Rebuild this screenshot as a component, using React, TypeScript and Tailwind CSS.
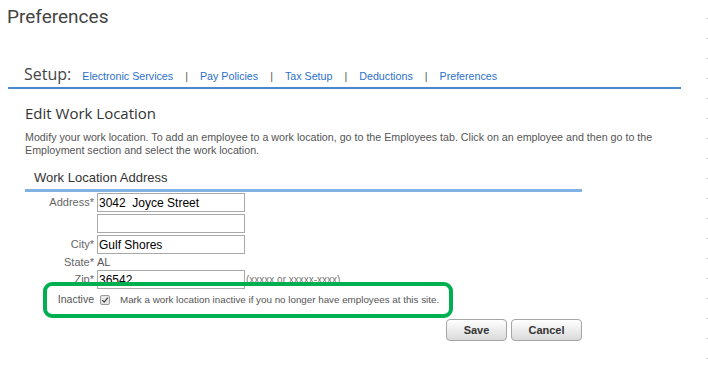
import React from "react";

const links = ["Electronic Services", "Pay Policies", "Tax Setup", "Deductions", "Preferences"];

function Row({ label, value }: { label: string; value: string }) {
  return (
    <div className="flex items-center h-[19px]">
      <span className="w-[69px] text-right text-[11px] leading-[13px] text-[#666]">{label}</span>
      <input
        readOnly
        defaultValue={value}
        className="ml-[3px] w-[148px] h-[19px] border border-[#a9a9a9] px-[1px] text-[12px] leading-[17px] text-black bg-white outline-none font-['Liberation_Sans',Arial,sans-serif]"
      />
    </div>
  );
}

export default function App() {
  return (
    <div className="relative flex w-[708px] h-[365px] bg-white overflow-hidden font-['Liberation_Sans',Arial,sans-serif]">
      <div className="flex-1 flex flex-col pt-[6px]">
        <div className="pl-[7px] h-[22px] leading-[22px] text-[19px] text-[#444] font-['Roboto',sans-serif]">
          Preferences
        </div>

        <div className="mt-[36px] ml-[8px] w-[673px] border-b-2 border-[#4a87cf] pb-[3px] pl-[16px] flex items-baseline">
          <span className="font-['Open_Sans',sans-serif] text-[16px] leading-[20px] text-[#444]">Setup:</span>
          <nav className="ml-[11px] flex items-baseline text-[10.7px] leading-[13px]">
            {links.map((l, i) => (
              <React.Fragment key={l}>
                {i > 0 && <span className="mx-[12px] text-[#555]">|</span>}
                <a className="text-[#2b70c9] cursor-pointer">{l}</a>
              </React.Fragment>
            ))}
          </nav>
        </div>

        <div className="mt-[14px] pl-[25px]">
          <h1 className="font-['Open_Sans',sans-serif] text-[15px] leading-[20px] text-[#333]">Edit Work Location</h1>
          <p className="mt-[8px] text-[10.7px] leading-[13px] text-[#555] whitespace-nowrap">
            Modify your work location. To add an employee to a work location, go to the Employees tab. Click on an employee and then go to the
            <br />
            Employment section and select the work location.
          </p>

          <div className="mt-[13px] w-[557px]">
            <div className="pl-[9px] pb-[3px] text-[13px] leading-[16px] text-[#333] border-b-[3px] border-[#80b2e6]">
              Work Location Address
            </div>

            <div className="mt-[1px] flex flex-col gap-[2px]">
              <Row label="Address*" value="3042  Joyce Street" />
              <Row label="" value="" />
              <Row label="City*" value="Gulf Shores" />
              <div className="flex items-center h-[12px]">
                <span className="w-[69px] text-right text-[11px] leading-[12px] text-[#666]">State*</span>
                <span className="ml-[3px] text-[11px] leading-[12px] text-[#555]">AL</span>
              </div>
              <div className="flex items-center h-[19px]">
                <span className="w-[69px] text-right text-[11px] leading-[13px] text-[#666]">Zip*</span>
                <input
                  readOnly
                  defaultValue="36542"
                  className="ml-[3px] w-[148px] h-[19px] border border-[#a9a9a9] px-[1px] text-[12px] leading-[17px] text-black bg-white outline-none font-['Liberation_Sans',Arial,sans-serif]"
                />
                <span className="ml-[1px] text-[10px] leading-[12px] text-[#777]">(xxxxx or xxxxx-xxxx)</span>
              </div>
              <div className="flex items-center h-[17px]">
                <span className="w-[69px] text-right text-[10.5px] leading-[13px] text-[#555]">Inactive</span>
                <span className="ml-[6px] w-[10px] h-[10px] border border-[#9a9a9a] bg-[#e8e8e8] rounded-[2px] flex items-center justify-center">
                  <svg viewBox="0 0 10 10" className="w-[8px] h-[8px]">
                    <path d="M1.5 5.2 L4 7.6 L8.6 2" fill="none" stroke="#444" strokeWidth="1.6" />
                  </svg>
                </span>
                <span className="ml-[10px] text-[9.8px] leading-[12px] text-[#555]">
                  Mark a work location inactive if you no longer have employees at this site.
                </span>
              </div>
            </div>

            <div className="mt-[11px] flex justify-end gap-[4px]">
              <button className="w-[61px] h-[22px] rounded-[4px] border border-[#a5a5a5] bg-gradient-to-b from-white to-[#dadada] text-[11px] font-bold text-[#333]">
                Save
              </button>
              <button className="w-[71px] h-[22px] rounded-[4px] border border-[#a5a5a5] bg-gradient-to-b from-white to-[#dadada] text-[11px] font-bold text-[#333]">
                Cancel
              </button>
            </div>
          </div>
        </div>
      </div>

      <div className="w-[2px] h-full bg-[repeating-linear-gradient(180deg,transparent_0px,transparent_18px,#cccccc_18px,#cccccc_19px,transparent_19px,transparent_20px)]" />

      <div className="absolute left-[43px] top-[282px] w-[410px] h-[36px] border-4 border-[#00b050] rounded-[9px] pointer-events-none" />
    </div>
  );
}
